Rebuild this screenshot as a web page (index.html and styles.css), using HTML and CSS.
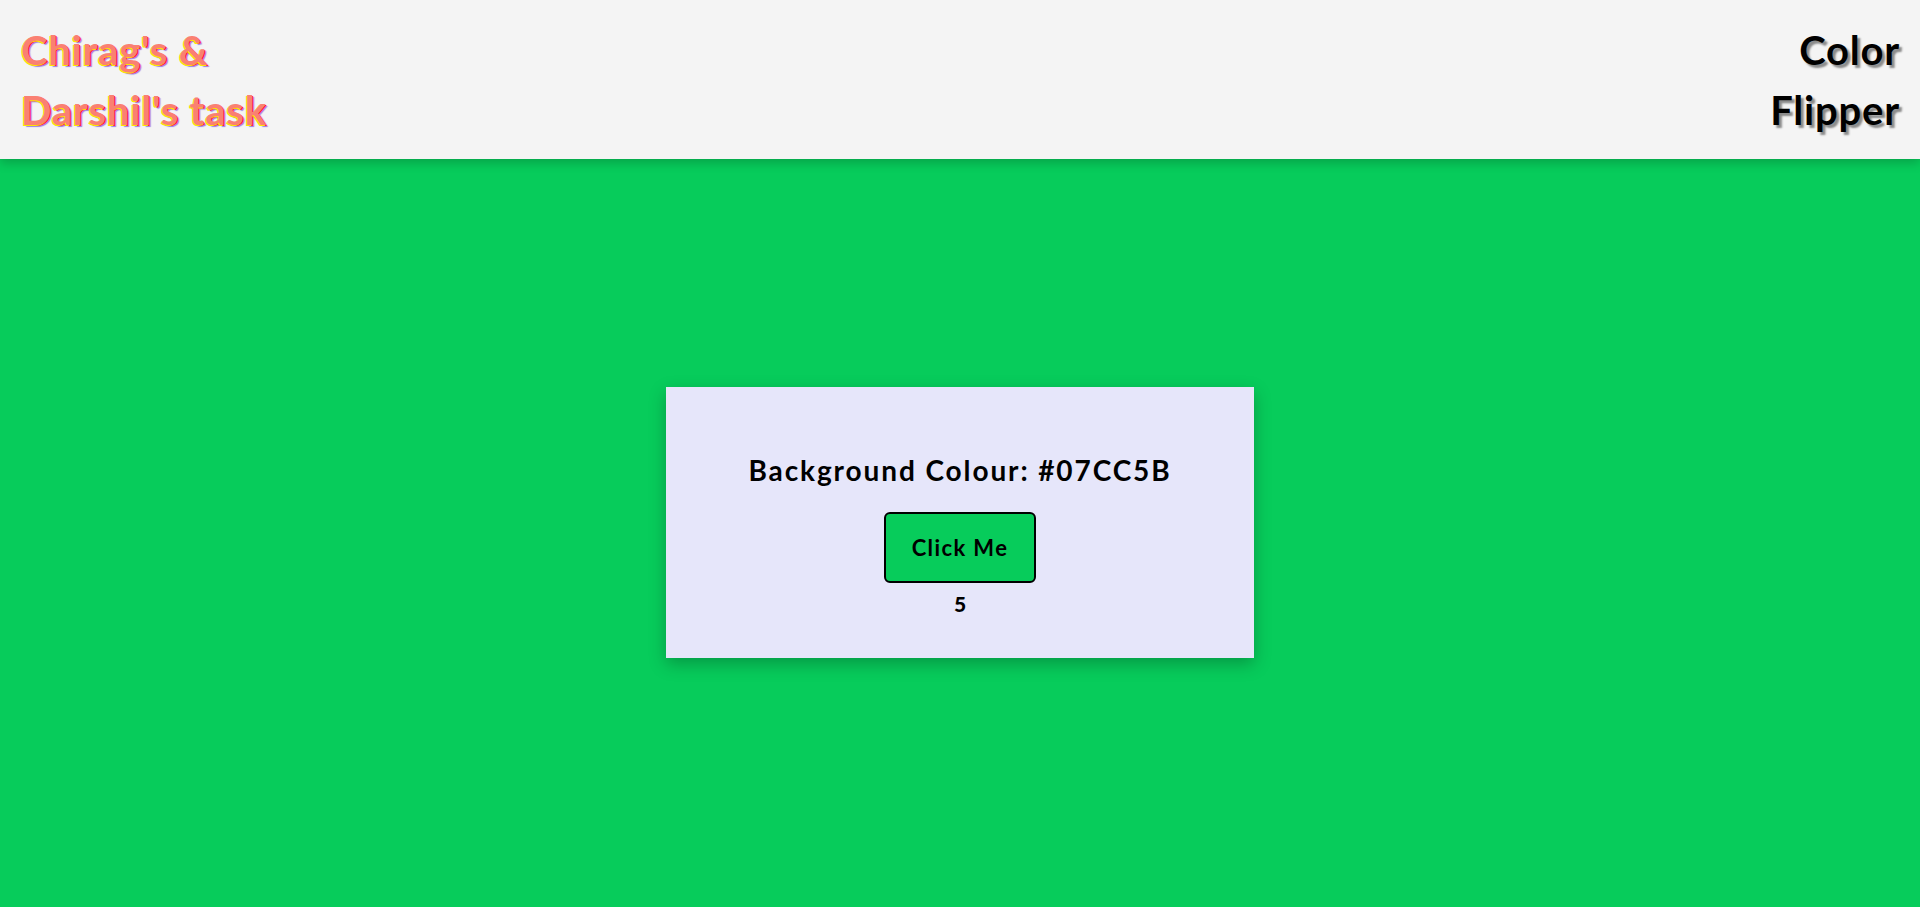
FILE: index.html
```html
<!DOCTYPE html>
<html lang="en">
<head>
<meta charset="UTF-8">
<title>Color Flipper</title>
<link rel="stylesheet" href="styles.css">
</head>
<body>
<header class="topbar">
  <h1 class="brand">Chirag's &amp;<br>Darshil's task</h1>
  <h1 class="title">Color<br>Flipper</h1>
</header>
<main class="stage">
  <section class="card">
    <h2 class="colour">Background Colour: #07CC5B</h2>
    <button class="btn">Click Me</button>
    <p class="count">5</p>
  </section>
</main>
</body>
</html>
```
FILE: styles.css
```css
* { box-sizing: border-box; }
html, body { margin: 0; padding: 0; }
body {
  background: #07cc5b;
  font-family: Lato, "Open Sans", sans-serif;
  min-height: 907px;
}
.topbar {
  display: flex;
  justify-content: space-between;
  align-items: flex-start;
  background: #f4f4f4;
  height: 159px;
  padding: 20px 20px 0 21px;
  box-shadow: 0 4px 10px rgba(0,0,0,0.2);
}
.brand, .title {
  margin: 0;
  font-size: 40px;
  line-height: 60px;
  font-weight: 700;
  letter-spacing: 0.8px;
}
.brand {
  color: #fa8072;
  text-shadow: -1px 1px 0 #ffe600, 1px 1px 0 #ff1a3c, 2px 2px 1px #9a80e0;
}
.title {
  text-align: right;
  color: #000;
  text-shadow: 3px 3px 2px #8a8a8a;
}
.stage {
  display: flex;
  justify-content: center;
  padding-top: 228px;
}
.card {
  width: 588px;
  height: 271px;
  background: #e6e6fa;
  box-shadow: 0 6px 16px rgba(0,0,0,0.25);
  display: flex;
  flex-direction: column;
  align-items: center;
  padding-top: 66px;
}
.colour {
  margin: 0;
  font-size: 28px;
  line-height: 34px;
  font-weight: 700;
  letter-spacing: 1.9px;
  color: #000;
}
.btn {
  margin-top: 25px;
  width: 152px;
  height: 71px;
  background: #07cc5b;
  border: 2px solid #000;
  border-radius: 6px;
  font-family: inherit;
  font-size: 22px;
  font-weight: 700;
  letter-spacing: 1.4px;
  color: #000;
}
.count {
  margin: 6px 0 0;
  font-size: 21px;
  line-height: 30px;
  font-weight: 900;
}
```
